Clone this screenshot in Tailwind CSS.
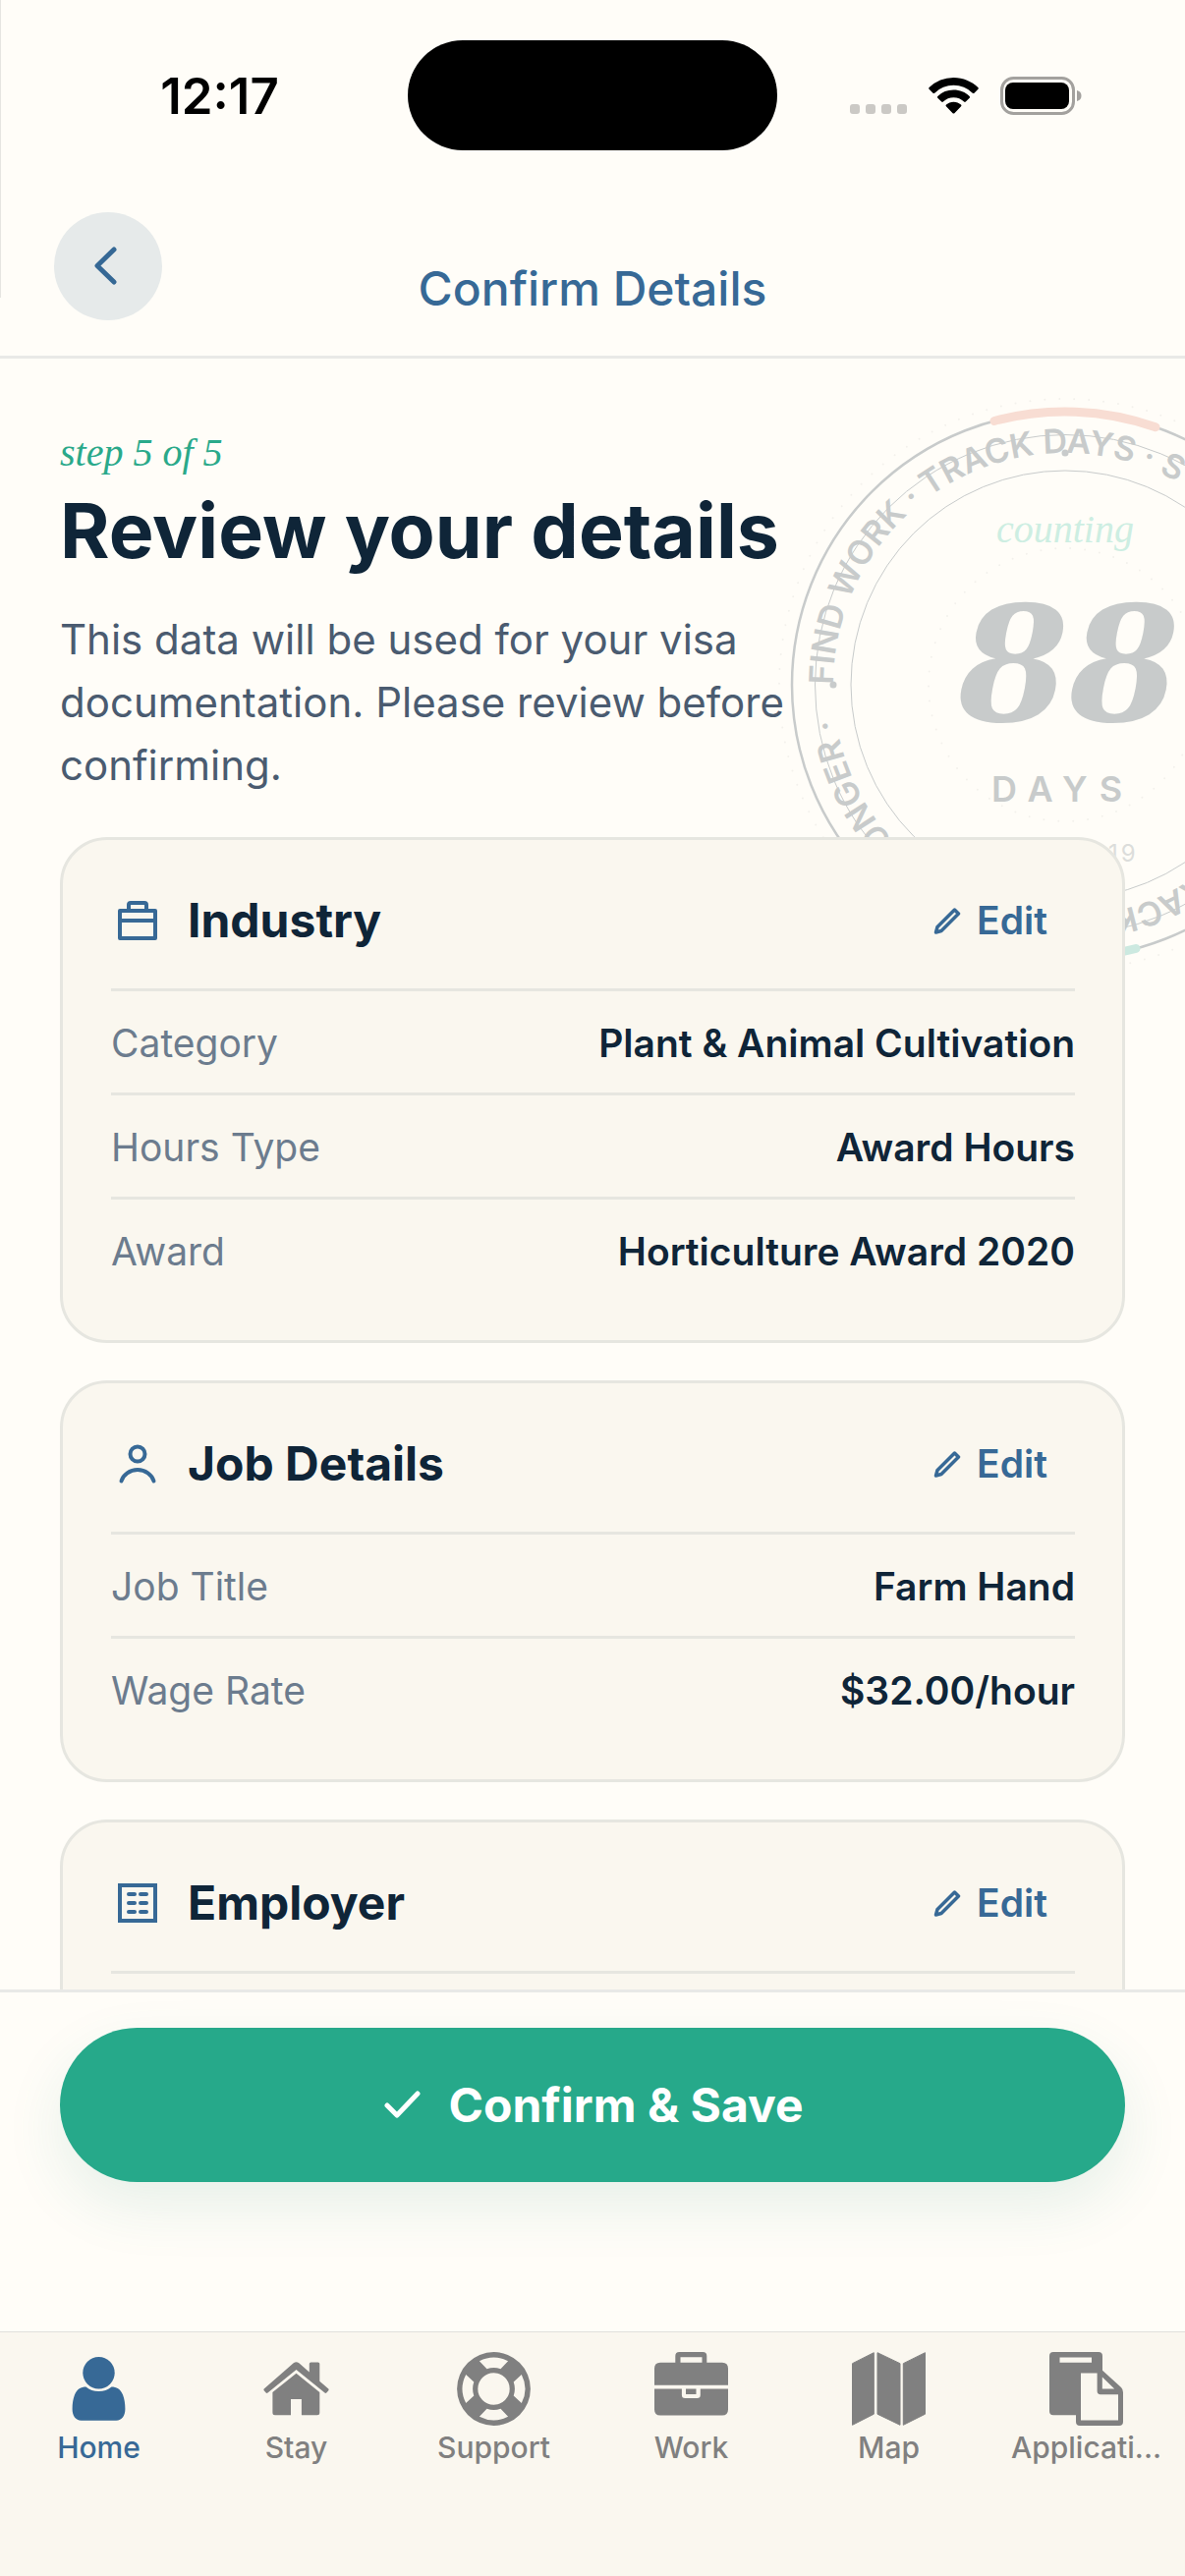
<!DOCTYPE html>
<html lang="en">
<head>
<meta charset="utf-8">
<meta name="viewport" content="width=device-width, initial-scale=1">
<title>Confirm Details</title>
<script src="https://cdn.jsdelivr.net/npm/@tailwindcss/browser@4"></script>
</head>
<body class="relative flex h-screen flex-col overflow-hidden bg-[#fffdf8] font-[Inter,sans-serif] text-[#0f2538]">
  <div class="absolute left-0 top-0 h-[303px] w-px bg-[#e6e5e1]"></div>

  <!-- Status bar -->
  <div class="grid h-[180px] shrink-0 grid-cols-[1fr_376px_1fr] items-start pt-[41px] text-black">
    <div class="flex h-28 items-center justify-center pl-8 text-[51px] font-semibold leading-none">12:17</div>
    <div class="h-28 rounded-full bg-black"></div>
    <svg class="ml-[74px] mt-9 h-10 w-[236px]" viewBox="0 0 236 40" fill="none" aria-label="Wi-Fi, battery full">
      <g fill="#cbc9c5"><rect x="0" y="29" width="10" height="10" rx="3"/><rect x="16" y="29" width="10" height="10" rx="3"/><rect x="32" y="29" width="10" height="10" rx="3"/><rect x="48" y="29" width="10" height="10" rx="3"/></g>
      <g fill="#000">
        <path d="M105.500 2c9.700 0 18.400 3.800 24.900 10.100.5.500.5 1.200 0 1.700l-3.900 3.900c-.5.500-1.200.5-1.700 0a27.500 27.500 0 0 0-38.600 0c-.5.500-1.200.5-1.700 0l-3.900-3.900c-.5-.5-.5-1.200 0-1.700A35.700 35.700 0 0 1 105.500 2z"/>
        <path d="M105.500 14.600c6.300 0 12 2.400 16.200 6.400.5.500.5 1.200 0 1.700l-3.900 3.900c-.5.500-1.200.5-1.700 0a15.300 15.300 0 0 0-21.200 0c-.5.500-1.200.5-1.700 0l-3.900-3.900c-.5-.5-.5-1.200 0-1.700a23.500 23.500 0 0 1 16.200-6.400z"/>
        <path d="M105.500 26.800c2.900 0 5.500 1.100 7.500 2.800.6.500.6 1.200.1 1.700l-6.700 6.900c-.5.500-1.300.5-1.800 0l-6.700-6.900c-.5-.5-.5-1.200.1-1.700 2-1.700 4.600-2.800 7.500-2.800z"/>
        <rect x="158" y="7" width="65" height="27" rx="8"/>
        <path d="M231 15c3.500 1 4.500 3.200 4.500 5.500s-1 4.500-4.500 5.500z" fill="#a3a19e"/>
      </g>
      <rect x="154.500" y="2.500" width="73" height="36" rx="12" stroke="#a3a19e" stroke-width="3"/>
    </svg>
  </div>

  <!-- Title bar -->
  <header class="grid shrink-0 grid-cols-[1fr_auto_1fr] border-b-3 border-[#e9e9e7] px-[55px] py-9">
    <button type="button" aria-label="Back" class="flex size-[110px] items-center justify-center rounded-full bg-[#e6eaea]">
      <svg class="size-12" viewBox="0 0 48 48" fill="none" stroke="#356895" stroke-width="5" stroke-linecap="round" stroke-linejoin="round"><path d="M30 7 13 23.500 30 40"/></svg>
    </button>
    <h1 class="self-end text-[48px] font-medium leading-16 text-[#376996]">Confirm Details</h1>
  </header>

  <main class="relative min-h-0 flex-1 overflow-hidden px-[61px] pt-[72px]">
    <!-- Day counter seal -->
    <svg class="absolute -right-[178px] top-8 size-[600px]" viewBox="0 0 600 600" fill="none" aria-hidden="true">
      <defs><path id="ring" d="M64 300a236 236 0 0 1 472 0a236 236 0 0 1-472 0"/></defs>
      <g stroke="#f3f1ec" stroke-width="2" stroke-linecap="round" stroke-dasharray="0 15"><circle cx="300" cy="300" r="291"/><circle cx="300" cy="300" r="139"/></g>
      <g stroke="#c8cbcb"><circle cx="300" cy="300" r="278" stroke-width="2.500"/><circle cx="300" cy="300" r="254.500"/><circle cx="300" cy="300" r="218"/></g>
      <path d="M228 31.500A278 278 0 0 1 392 37.800" stroke="#f8ddd3" stroke-width="9" stroke-linecap="round"/>
      <path d="M372 568.500A278 278 0 0 1 228 568.500" stroke="#cce9e0" stroke-width="9" stroke-linecap="round"/>
      <g fill="#c8cbcb" class="font-[Inter,sans-serif] font-semibold">
        <circle cx="300" cy="64" r="3.500"/><circle cx="64" cy="300" r="3.500"/>
        <g font-size="34">
          <text><textPath href="#ring">FIND WORK · TRACK DAYS · STAY LONGER ·</textPath></text>
          <text transform="rotate(176 300 300)"><textPath href="#ring">FIND WORK · TRACK DAYS · STAY LONGER ·</textPath></text>
        </g>
        <text x="225" y="419" font-size="36" letter-spacing="12">DAYS</text>
        <text x="344" y="480" font-size="24" font-weight="400" letter-spacing="3" fill="#dcdddb">19</text>
      </g>
      <text x="300" y="155" text-anchor="middle" font-size="40" font-style="italic" fill="#cdeee2" class="font-[Liberation_Serif,serif]">counting</text>
      <text x="304" y="337" text-anchor="middle" font-size="162" font-style="italic" font-weight="700" fill="#c8cbcb" class="font-[DejaVu_Serif,serif]">88</text>
    </svg>

    <div class="relative">
      <p class="font-[Liberation_Serif,serif] text-[40px] italic leading-12 text-[#2aa98a]">step 5 of 5</p>
      <h2 class="mt-3 text-[77px] font-bold leading-[86px]">Review your details</h2>
      <p class="mt-9 max-w-[760px] text-[42px] leading-16 text-[#4a5b70]">This data will be used for your visa documentation. Please review before confirming.</p>

      <div class="mt-[41px] flex flex-col gap-[38px]">
        <section class="rounded-[48px] border-3 border-[#e6e6e0] bg-[#faf7ef] pl-[49px] pr-12 pb-10">
          <div class="flex items-center border-b-3 border-[#e6e6e0] pb-[35px] pt-12">
            <svg class="mx-[7px] size-10" viewBox="0 0 40 40" fill="none" stroke="#376996" stroke-width="4" stroke-linejoin="round"><path d="M2 10h36v28H2zM2 20h36M11 10V4q0-2 2-2h14q2 0 2 2v6"/></svg>
            <h3 class="ml-6 flex-1 text-[48px] font-bold leading-[68px]">Industry</h3>
            <button type="button" class="mr-7 flex items-center gap-4 text-[39px] font-semibold leading-[68px] text-[#376996]">
              <svg class="size-7" viewBox="0 0 28 28" fill="none" stroke="currentColor" stroke-width="3.500" stroke-linejoin="round"><path d="M2.500 26 4 20.500 21.500 3 25.500 7 8 24.500z"/></svg>Edit</button>
          </div>
          <dl class="text-[39px] leading-[55px]">
            <div class="flex justify-between border-b-3 border-[#e6e6e0] pb-[23px] pt-[25px]"><dt class="text-[#6c7c8e]">Category</dt><dd class="font-semibold">Plant &amp; Animal Cultivation</dd></div>
            <div class="flex justify-between border-b-3 border-[#e6e6e0] pb-[23px] pt-[25px]"><dt class="text-[#6c7c8e]">Hours Type</dt><dd class="font-semibold">Award Hours</dd></div>
            <div class="flex justify-between pb-[23px] pt-[25px]"><dt class="text-[#6c7c8e]">Award</dt><dd class="font-semibold">Horticulture Award 2020</dd></div>
          </dl>
        </section>

        <section class="rounded-[48px] border-3 border-[#e6e6e0] bg-[#faf7ef] pl-[49px] pr-12 pb-10">
          <div class="flex items-center border-b-3 border-[#e6e6e0] pb-[35px] pt-12">
            <svg class="mx-[7px] size-10" viewBox="0 0 40 40" fill="none" stroke="#376996" stroke-width="4" stroke-linecap="round"><circle cx="20" cy="10" r="7.500"/><path d="M3.500 37.500a17 15 0 0 1 33 0"/></svg>
            <h3 class="ml-6 flex-1 text-[48px] font-bold leading-[68px]">Job Details</h3>
            <button type="button" class="mr-7 flex items-center gap-4 text-[39px] font-semibold leading-[68px] text-[#376996]">
              <svg class="size-7" viewBox="0 0 28 28" fill="none" stroke="currentColor" stroke-width="3.500" stroke-linejoin="round"><path d="M2.500 26 4 20.500 21.500 3 25.500 7 8 24.500z"/></svg>Edit</button>
          </div>
          <dl class="text-[39px] leading-[55px]">
            <div class="flex justify-between border-b-3 border-[#e6e6e0] pb-[23px] pt-[25px]"><dt class="text-[#6c7c8e]">Job Title</dt><dd class="font-semibold">Farm Hand</dd></div>
            <div class="flex justify-between pb-[23px] pt-[25px]"><dt class="text-[#6c7c8e]">Wage Rate</dt><dd class="font-semibold">$32.00/hour</dd></div>
          </dl>
        </section>

        <section class="rounded-[48px] border-3 border-[#e6e6e0] bg-[#faf7ef] pl-[49px] pr-12 pb-40">
          <div class="flex items-center border-b-3 border-[#e6e6e0] pb-[35px] pt-12">
            <svg class="mx-[7px] size-10" viewBox="0 0 40 40" fill="none" stroke="#376996" stroke-width="4"><path d="M2 2h36v36H2z"/><path stroke-linecap="round" d="M11 11h6M23 11h6M11 20h6M23 20h6M11 29h6M23 29h6"/></svg>
            <h3 class="ml-6 flex-1 text-[48px] font-bold leading-[68px]">Employer</h3>
            <button type="button" class="mr-7 flex items-center gap-4 text-[39px] font-semibold leading-[68px] text-[#376996]">
              <svg class="size-7" viewBox="0 0 28 28" fill="none" stroke="currentColor" stroke-width="3.500" stroke-linejoin="round"><path d="M2.500 26 4 20.500 21.500 3 25.500 7 8 24.500z"/></svg>Edit</button>
          </div>
        </section>
      </div>
    </div>
  </main>

  <footer class="relative shrink-0 border-t-3 border-[#e9e9e7] bg-[#fffdf8] px-[61px] pb-[152px] pt-9">
    <button type="button" class="flex h-[157px] w-full items-center justify-center gap-7 rounded-full bg-[#26a98a] text-[48px] font-bold text-white shadow-[0_24px_60px_rgba(38,140,120,0.11)]">
      <svg class="size-10" viewBox="0 0 40 40" fill="none" stroke="currentColor" stroke-width="5" stroke-linecap="round" stroke-linejoin="round"><path d="M6 20 16 30 37 8"/></svg>
      Confirm &amp; Save
    </button>
  </footer>

  <nav class="grid h-[249px] shrink-0 grid-cols-6 items-start border-t border-[#e0e0dc] bg-[#faf7ef] pt-5 text-[30px] font-medium leading-9 text-[#808080]">
    <a href="#home" aria-current="page" class="flex flex-col items-center gap-1 text-[#376996]">
      <svg class="size-[75px]" viewBox="0 0 75 75" fill="currentColor"><circle cx="37.500" cy="21.300" r="16.200"/><path d="M24.500 35.500c3.500 3 8 4.500 13 4.500s9.500-1.500 13-4.500c5 0 9 2 11.500 8 1.600 4.200 2.400 9 2.400 14.500 0 7-3.400 11.700-9 11.700H19.600c-5.600 0-9-4.700-9-11.700 0-5.500.8-10.300 2.400-14.500 2.500-6 6.500-8 11.500-8z"/></svg>Home</a>
    <a href="#stay" class="flex flex-col items-center gap-1">
      <svg class="size-[75px]" viewBox="0 0 75 75" fill="currentColor"><path d="M34.700 11.300q2.800-1.900 5.600 0L50.800 20.500V12q0-1.500 1.500-1.500h7.500q1.500 0 1.500 1.500v17.700l9 7.800q.8.800 0 1.700l-2 2.400q-.8.900-1.800 0L37.500 18 8.500 41.600q-1 .9-1.800 0l-2-2.400q-.8-.9 0-1.700z"/><path d="M37.500 21.700 61.300 41v20.800q0 2.500-2.500 2.500H42.900V48H32v16.300H15.900q-2.500 0-2.500-2.500V41z"/></svg>Stay</a>
    <a href="#support" class="flex flex-col items-center gap-1">
      <svg class="size-[75px]" viewBox="-37.500 -37.500 75 75" fill="currentColor"><path fill-rule="evenodd" d="M0-37.400A37.400 37.400 0 0 1 0 37.400A37.400 37.400 0 0 1 0-37.400zM0-16.200A16.200 16.200 0 0 0 0 16.200A16.200 16.200 0 0 0 0-16.200zM-14.600-28.300-7-20.200A21.300 21.300 0 0 1 7-20.200L14.600-28.300A32 32 0 0 0-14.600-28.300zM-14.600 28.300-7 20.200A21.300 21.300 0 0 0 7 20.200L14.600 28.300A32 32 0 0 1-14.600 28.300zM-28.300-14.600-20.200-7A21.300 21.300 0 0 0-20.200 7L-28.300 14.600A32 32 0 0 1-28.300-14.600zM28.300-14.600 20.200-7A21.300 21.300 0 0 1 20.200 7L28.300 14.600A32 32 0 0 0 28.300-14.600z"/></svg>Support</a>
    <a href="#work" class="flex flex-col items-center gap-1">
      <svg class="size-[75px]" viewBox="0 0 75 75" fill="currentColor"><path fill-rule="evenodd" d="M21.300 10.700V4q0-4 4-4h24q4 0 4 4v6.700H69q6 0 6 6v17H0v-17q0-6 6-6zM26.500 5.300v5.400h22V5.300z"/><path d="M0 37.500h27.900v6.200q0 3.300 3.300 3.300h12.300q3.300 0 3.300-3.300v-6.200H75v21q0 6-6 6H6q-6 0-6-6z"/><path d="M32 37.500h10.500V43H32z"/></svg>Work</a>
    <a href="#map" class="flex flex-col items-center gap-1">
      <svg class="size-[75px]" viewBox="0 0 75 75" fill="currentColor" stroke="currentColor" stroke-linejoin="round"><path d="M.5 11.700 22.300.7v62.500L.5 74.300zM26 .7l23 11v62.600L26 63.200zM52.300 11.700 74.500.7v62.500L52.300 74.300z"/></svg>Map</a>
    <a href="#applications" aria-label="Applications" class="flex flex-col items-center gap-1">
      <svg class="size-[75px]" viewBox="0 0 75 75"><path fill="currentColor" fill-rule="evenodd" d="M4 0h46q4 0 4 4v14.700L73 36q2 2 2 5v30q0 4-4 4H31q-4 0-4-4v-6.700H4q-4 0-4-4V4q0-4 4-4zM10.500 5.400v5.300H43V5.400zM32 21.400v48h38V43.200H52q-3.400 0-3.400-3.400V21.400zM53.800 25.400v12H66.200z"/></svg>Applicati...</a>
  </nav>
</body>
</html>
